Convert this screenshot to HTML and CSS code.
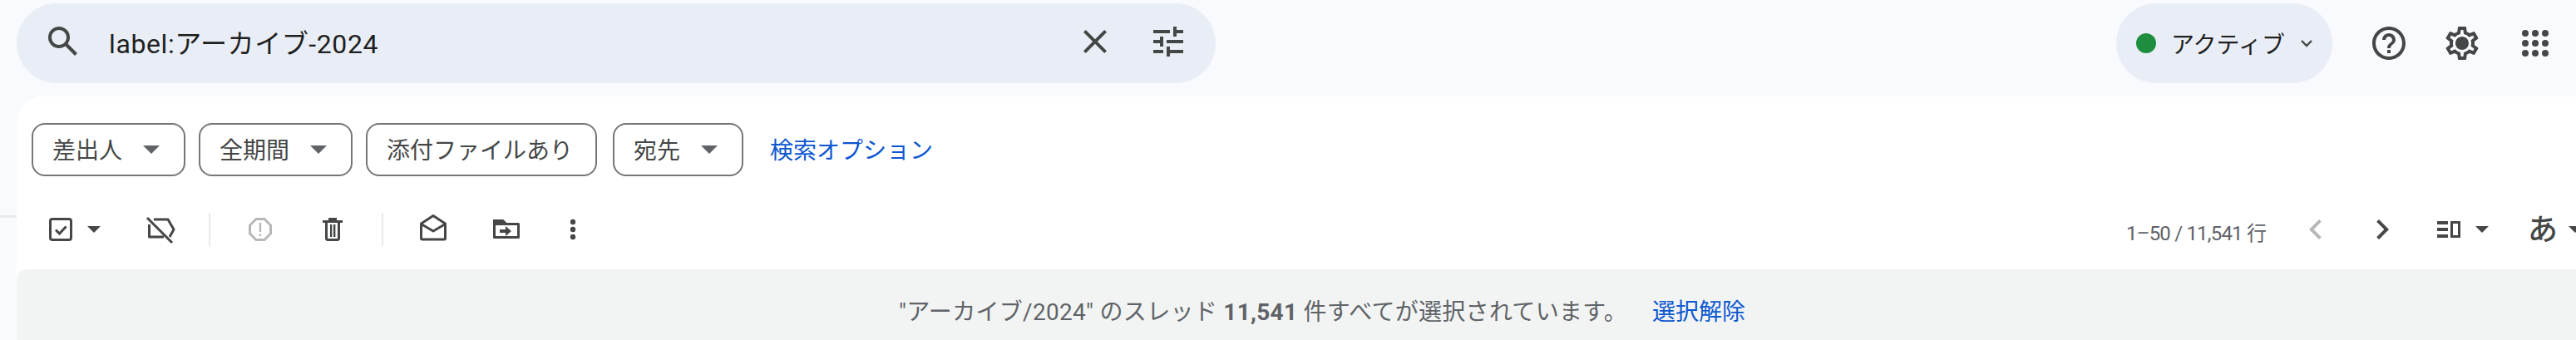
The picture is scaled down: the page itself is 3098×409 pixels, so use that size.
FILE: index.html
```html
<!DOCTYPE html>
<html lang="ja">
<head>
<meta charset="utf-8">
<title>Gmail</title>
<link rel="stylesheet" href="styles.css">
</head>
<body>
<div class="page">
  <header class="top">
    <div class="search">
      <svg class="ic48 search-ic" viewBox="0 0 24 24"><path d="M20.49 19l-5.73-5.73C15.53 12.2 16 10.91 16 9.5A6.5 6.5 0 1 0 9.5 16c1.41 0 2.7-.47 3.77-1.24L19 20.49 20.49 19zM5 9.5C5 7.01 7.01 5 9.5 5S14 7.01 14 9.5 11.99 14 9.5 14 5 11.99 5 9.5z"/></svg>
      <div class="query">label:アーカイブ-2024</div>
      <svg class="ic48 close-ic" viewBox="0 0 24 24"><path d="M19 6.41L17.59 5 12 10.59 6.41 5 5 6.41 10.59 12 5 17.59 6.41 19 12 13.41 17.59 19 19 17.59 13.41 12 19 6.41z"/></svg>
      <svg class="ic48 tune-ic" viewBox="0 0 24 24"><path d="M3 17v2h6v-2H3zM3 5v2h10V5H3zm10 16v-2h8v-2h-8v-2h-2v6h2zM7 9v2H3v2h4v2h2V9H7zm14 4v-2H11v2h10zm-6-4h2V7h4V5h-4V3h-2v6z"/></svg>
    </div>
    <div class="status">
      <span class="dot"></span>
      <span class="status-text">アクティブ</span>
      <svg class="chev" viewBox="0 0 16 16"><path d="M2 5l6 6 6-6" fill="none" stroke="#444746" stroke-width="2.4"/></svg>
    </div>
    <div class="top-icons">
      <svg class="ic48" viewBox="0 0 24 24"><path d="M11 18h2v-2h-2v2zm1-16C6.48 2 2 6.48 2 12s4.48 10 10 10 10-4.48 10-10S17.52 2 12 2zm0 18c-4.41 0-8-3.59-8-8s3.59-8 8-8 8 3.59 8 8-3.59 8-8 8zm0-14c-2.21 0-4 1.79-4 4h2c0-1.1.9-2 2-2s2 .9 2 2c0 2-3 1.75-3 5h2c0-2.25 3-2.5 3-5 0-2.21-1.79-4-4-4z"/></svg>
      <svg class="ic48" viewBox="0 0 24 24"><path d="M19.43 12.98c.04-.32.07-.64.07-.98 0-.34-.03-.66-.07-.98l2.11-1.65c.19-.15.24-.42.12-.64l-2-3.46c-.09-.16-.26-.25-.44-.25-.06 0-.12.01-.17.03l-2.49 1c-.52-.4-1.08-.73-1.69-.98l-.38-2.65C14.46 2.18 14.25 2 14 2h-4c-.25 0-.46.18-.49.42l-.38 2.65c-.61.25-1.17.59-1.69.98l-2.49-1c-.06-.02-.12-.03-.18-.03-.17 0-.34.09-.43.25l-2 3.46c-.13.22-.07.49.12.64l2.11 1.65c-.04.32-.07.65-.07.98 0 .33.03.66.07.98l-2.11 1.65c-.19.15-.24.42-.12.64l2 3.46c.09.16.26.25.44.25.06 0 .12-.01.17-.03l2.49-1c.52.4 1.08.73 1.69.98l.38 2.65c.03.24.24.42.49.42h4c.25 0 .46-.18.49-.42l.38-2.65c.61-.25 1.17-.59 1.69-.98l2.49 1c.06.02.12.03.18.03.17 0 .34-.09.43-.25l2-3.46c.12-.22.07-.49-.12-.64l-2.11-1.65zm-1.98-1.71c.04.31.05.52.05.73 0 .21-.02.43-.05.73l-.14 1.13.89.7 1.08.84-.7 1.21-1.27-.51-1.04-.42-.9.68c-.43.32-.84.56-1.25.73l-1.06.43-.16 1.13-.2 1.35h-1.4l-.19-1.35-.16-1.13-1.06-.43c-.43-.18-.83-.41-1.23-.71l-.91-.7-1.06.43-1.27.51-.7-1.21 1.08-.84.89-.7-.14-1.13c-.03-.31-.05-.54-.05-.74s.02-.43.05-.73l.14-1.13-.89-.7-1.08-.84.7-1.21 1.27.51 1.04.42.9-.68c.43-.32.84-.56 1.25-.73l1.06-.43.16-1.13.2-1.35h1.39l.19 1.35.16 1.13 1.06.43c.43.18.83.41 1.23.71l.91.7 1.06-.43 1.27-.51.7 1.21-1.07.85-.89.7.14 1.13zM12 8c-2.21 0-4 1.79-4 4s1.79 4 4 4 4-1.79 4-4-1.79-4-4-4z"/></svg>
      <svg class="ic48" viewBox="0 0 48 48"><circle cx="12" cy="12" r="4"/><circle cx="24" cy="12" r="4"/><circle cx="36" cy="12" r="4"/><circle cx="12" cy="24" r="4"/><circle cx="24" cy="24" r="4"/><circle cx="36" cy="24" r="4"/><circle cx="12" cy="36" r="4"/><circle cx="24" cy="36" r="4"/><circle cx="36" cy="36" r="4"/></svg>
    </div>
  </header>
  <div class="main">
    <div class="rail"><div class="rail-line"></div></div>
    <main class="panel">
      <div class="filters">
        <div class="chip">差出人<span class="tri chip-tri"></span></div>
        <div class="chip">全期間<span class="tri chip-tri"></span></div>
        <div class="chip chip-plain">添付ファイルあり</div>
        <div class="chip">宛先<span class="tri chip-tri"></span></div>
        <a class="adv">検索オプション</a>
      </div>
      <div class="toolbar">
        <svg class="ic48 t-check" viewBox="0 0 48 48"><rect x="11.500" y="11.500" width="25" height="25" rx="2.500" fill="none" stroke="#444746" stroke-width="3"/><path d="M18 24.500l4.500 4.500 8-8.500" fill="none" stroke="#444746" stroke-width="3"/></svg>
        <span class="tri t-arrow"></span>
        <svg class="ic48 t-label" viewBox="0 0 48 48"><path d="M10.500 18v15H28M16 12h17l7 12-5 9" fill="none" stroke="#444746" stroke-width="3" stroke-linejoin="round"/><path d="M8 10l30 30" fill="none" stroke="#444746" stroke-width="3"/></svg>
        <span class="sep sep1"></span>
        <svg class="ic48 t-spam" viewBox="0 0 48 48"><path d="M19 11.500h10l7.500 7.500v10L29 36.500H19L11.500 29V19z" fill="none" stroke="#b6b8b8" stroke-width="3"/><path d="M22.800 16h2.400v11h-2.400zM22.800 29.500h2.400v2.500h-2.400z" fill="#b6b8b8"/></svg>
        <svg class="ic48 t-trash" viewBox="0 0 48 48"><path d="M19 10h10v3h7v3H12v-3h7z"/><path d="M15 16h3v19h12V16h3v19c0 1.600-1.400 3-3 3H18c-1.600 0-3-1.400-3-3z"/><path d="M21 18h2.400v15H21zM25 18h2.400v15H25z"/></svg>
        <span class="sep sep2"></span>
        <svg class="ic48 t-open" viewBox="0 0 48 48"><path d="M9.500 17L24 7.500 38.500 17v17.500c0 1-.5 1.500-1.500 1.500H11c-1 0-1.500-.5-1.500-1.500zM9.500 17.500L24 26l14.500-8.500" fill="none" stroke="#444746" stroke-width="3" stroke-linejoin="round"/></svg>
        <svg class="ic48 t-move" viewBox="0 0 48 48"><path d="M9.500 13.500h10l4 4h15v16h-29z" fill="none" stroke="#444746" stroke-width="3" stroke-linejoin="round"/><path d="M8 12h12l4 4v3H8z" fill="#444746"/><path d="M16 24h7v-4l7 6-7 6v-4h-7z" fill="#444746"/></svg>
        <svg class="ic48 t-more" viewBox="0 0 48 48"><circle cx="24" cy="15" r="3.200"/><circle cx="24" cy="24" r="3.200"/><circle cx="24" cy="33" r="3.200"/></svg>
        <div class="pager">1–50 / 11,541 行</div>
        <svg class="ic48 t-prev" viewBox="0 0 24 24"><path d="M15.410 7.410L14 6l-6 6 6 6 1.410-1.410L10.830 12z" fill="#b6b8b8"/></svg>
        <svg class="ic48 t-next" viewBox="0 0 24 24"><path d="M10 6L8.590 7.410 13.170 12l-4.580 4.590L10 18l6-6z"/></svg>
        <svg class="ic48 t-split" viewBox="0 0 48 48"><path d="M10 14h13v4H10zM10 22h13v4H10zM10 30h13v4H10z"/><path d="M27.500 15.500h9v17h-9z" fill="none" stroke="#444746" stroke-width="3"/></svg>
        <span class="tri t-arrow2"></span>
        <span class="lang">あ</span>
        <span class="tri t-arrow3"></span>
      </div>
      <div class="banner">
        <span class="banner-text">"アーカイブ/2024" のスレッド <b>11,541</b> 件すべてが選択されています。</span>
        <a class="clear">選択解除</a>
      </div>
    </main>
  </div>
</div>
</body>
</html>
```
FILE: styles.css
```css
* { box-sizing: border-box; }
html, body { margin: 0; padding: 0; height: 100%; overflow: hidden; }
body { background: #f8fafd; color: #444746; font-family: Roboto, "Noto Sans CJK JP", sans-serif; }
.page { width: 3098px; height: 409px; display: flex; flex-direction: column; overflow: hidden; }
.ic48 { width: 48px; height: 48px; flex: none; fill: #444746; display: block; }

.top { height: 116px; flex: none; display: flex; align-items: flex-start; }
.search { margin: 4px 0 0 20px; width: 1442px; height: 96px; border-radius: 48px; background: #e9eef6; display: flex; align-items: center; padding: 0 0 4px 32px; }
.query { margin-left: 31px; font-size: 32px; color: #1f1f1f; flex: 1; letter-spacing: .6px; }
.close-ic { margin-right: 40px; }
.tune-ic { margin-right: 33px; }

.status { margin: 4px 0 0 1083px; width: 260px; height: 96px; border-radius: 48px; background: #e9eef6; display: flex; align-items: center; padding-left: 24px; flex: none; }
.dot { width: 24px; height: 24px; border-radius: 50%; background: #1e8e3e; flex: none; }
.status-text { margin-left: 18px; font-size: 28px; color: #1f1f1f; white-space: nowrap; }
.chev { width: 16px; height: 16px; margin-left: 18px; flex: none; }
.top-icons { margin: 4px 0 0 44px; height: 96px; display: flex; align-items: center; gap: 40px; flex: none; }

.main { flex: 1; display: flex; min-height: 0; }
.rail { width: 20px; flex: none; padding-top: 143px; }
.rail-line { height: 3px; background: #e9eaec; }
.panel { width: 3140px; flex: none; background: #fff; border-radius: 32px 0 0 0; display: flex; flex-direction: column; }

.filters { display: flex; align-items: center; gap: 16px; padding: 32px 0 0 18px; }
.chip { height: 64px; border: 2px solid #747775; border-radius: 16px; padding: 0 29px 3px 23px; display: flex; align-items: center; font-size: 28px; color: #444746; white-space: nowrap; flex: none; }
.chip-plain { margin-right: 3px; padding: 0 27px 3px 23px; }
.tri { width: 0; height: 0; display: block; flex: none; border-left: 10px solid transparent; border-right: 10px solid transparent; border-top: 10px solid #444746; }
.chip-tri { margin-left: 25px; margin-top: 3px; border-top-color: #5f6368; }
.adv { margin-left: 16px; padding-bottom: 3px; font-size: 28px; color: #0b57d0; white-space: nowrap; }

.toolbar { margin-top: 16px; height: 96px; display: flex; align-items: center; flex: none; }
.t-check { margin-left: 29px; }
.t-arrow { margin-left: 8px; border-left-width: 8px; border-right-width: 8px; border-top-width: 8px; }
.t-label { margin-left: 48px; }
.sep { width: 2px; height: 40px; background: #e8eaed; flex: none; }
.sep1 { margin-left: 34px; }
.t-spam { margin-left: 36px; }
.t-trash { margin-left: 39px; }
.sep2 { margin-left: 35px; }
.t-open { margin-left: 36px; }
.t-move { margin-left: 40px; }
.t-more { margin-left: 32px; }
.pager { margin-left: 1844px; width: 167px; font-size: 24px; letter-spacing: -.8px; color: #5f6368; white-space: nowrap; flex: none; padding-top: 4px; }
.t-prev { margin-left: 37px; }
.t-next { margin-left: 32px; }
.t-split { margin-left: 32px; }
.t-arrow2 { margin-left: 8px; border-left-width: 8px; border-right-width: 8px; border-top-width: 8px; }
.lang { margin: 2px 0 0 47px; font-size: 36px; font-weight: 500; color: #444746; line-height: 48px; flex: none; }
.t-arrow3 { margin-left: 13px; border-left-width: 8px; border-right-width: 8px; border-top-width: 8px; }

.banner { flex: 1; background: #f2f4f3; border-radius: 12px 0 0 0; display: flex; align-items: center; justify-content: center; font-size: 28px; color: #5f6368; padding: 13px 0 0; white-space: nowrap; }
.banner-text { letter-spacing: .3px; }
.banner b { font-weight: 700; }
.clear { margin-left: 30px; font-size: 28px; color: #0b57d0; }
```
